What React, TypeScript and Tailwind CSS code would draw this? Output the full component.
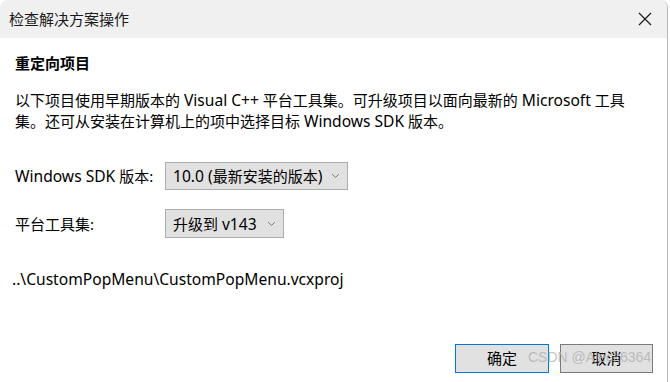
import React from "react";

const font = { fontFamily: '"Noto Sans", "Noto Sans CJK SC", sans-serif' };

function L({ children }: { children: React.ReactNode }) {
  return <span className="text-[15.6px]">{children}</span>;
}

function Chevron() {
  return (
    <svg width="9" height="6" viewBox="0 0 9 6" className="shrink-0">
      <path d="M1.2 1.2 L4.5 4.4 L7.8 1.2" fill="none" stroke="#7a7a7a" strokeWidth="1" />
    </svg>
  );
}

export default function App() {
  return (
    <div
      className="relative w-[670px] h-[382px] bg-white overflow-hidden text-[#000] text-[15px]"
      style={font}
    >
      <div className="w-[668px] h-[382px] border-r border-[#b5b5b5] rounded-tr-[8px] rounded-tl-[8px] overflow-hidden flex flex-col bg-white">
        <div className="h-[38px] bg-[#f0f0f0] flex items-center justify-between pl-[9px] pr-[15px] shrink-0">
          <span className="text-[15px] leading-[20px] text-[#1a1a1a]">检查解决方案操作</span>
          <svg width="14" height="14" viewBox="0 0 14 14">
            <path d="M1 1 L13 13 M13 1 L1 13" stroke="#1a1a1a" strokeWidth="1.2" fill="none" />
          </svg>
        </div>
        <div className="flex flex-col pl-[15px] pr-[20px]">
          <div className="mt-[15px] font-bold leading-[20px]">重定向项目</div>
          <div className="mt-[17px] leading-[21px] whitespace-nowrap">
            以下项目使用早期版本的 <L>Visual C++</L> 平台工具集。可升级项目以面向最新的 <L>Microsoft</L> 工具
            <br />
            集。还可从安装在计算机上的项中选择目标 <L>Windows SDK</L> 版本。
          </div>
          <div className="mt-[30px] flex items-center">
            <span className="w-[150px] leading-[20px]">
              <L>Windows SDK</L> 版本:
            </span>
            <div className="h-[28px] w-[183px] border border-[#adadad] bg-[#e1e1e1] flex items-center justify-between pl-[7px] pr-[7px]">
              <span className="leading-[20px]">
                <L>10.0 (</L>最新安装的版本<L>)</L>
              </span>
              <Chevron />
            </div>
          </div>
          <div className="mt-[19px] flex items-center">
            <span className="w-[150px] leading-[20px]">平台工具集:</span>
            <div className="h-[29px] w-[119px] border border-[#adadad] bg-[#e1e1e1] flex items-center justify-between pl-[7px] pr-[7px]">
              <span className="leading-[20px]">
                升级到 <L>v143</L>
              </span>
              <Chevron />
            </div>
          </div>
          <div className="mt-[31px] -ml-[3px] leading-[20px] text-[15.6px]">
            ..\CustomPopMenu\CustomPopMenu.vcxproj
          </div>
        </div>
        <div className="mt-auto mb-[9px] flex justify-end gap-[11px] pr-[14px]">
          <div className="w-[94px] h-[29px] border border-[#0078d7] bg-[#e1e1e1] flex items-center justify-center text-[15px]">
            确定
          </div>
          <div className="w-[93px] h-[29px] border border-[#7a7a7a] bg-[#e1e1e1] flex items-center justify-center text-[15px]">
            取消
          </div>
        </div>
      </div>
      <div
        className="absolute left-[528px] top-[349px] text-[14px] leading-[17px] text-[#b0b0b0]/80"
        style={{ fontFamily: '"Liberation Sans", Arial, sans-serif' }}
      >
        CSDN @Aleck6364
      </div>
    </div>
  );
}
